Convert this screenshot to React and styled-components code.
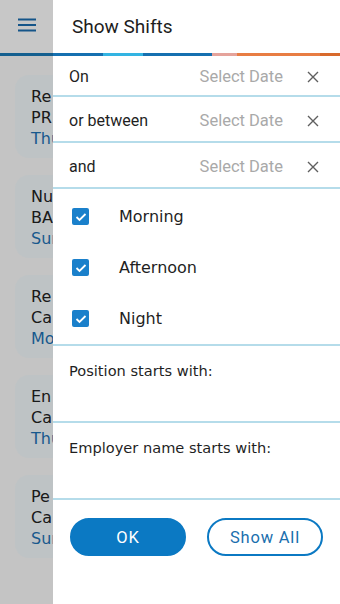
import React from "react";
import styled, { createGlobalStyle } from "styled-components";

const Global = createGlobalStyle`
  html, body { margin: 0; padding: 0; background: #ffffff; }
  body { width: 340px; height: 604px; overflow: hidden; }
  * { box-sizing: border-box; }
`;

const Page = styled.div`
  width: 340px;
  height: 604px;
  background: #fbfbfb;
  font-family: "DejaVu Sans", sans-serif;
  display: flex;
  flex-direction: column;
`;

const PageHeader = styled.header`
  height: 56px;
  flex: none;
  display: flex;
  align-items: center;
  padding: 0 0 3px 18px;
  border-bottom: 3px solid #1a7ab8;
  background: #ffffff;
`;

const CardList = styled.div`
  display: flex;
  flex-direction: column;
  gap: 17px;
  padding: 19px 15px 0 15px;
`;

const Card = styled.div`
  background: #f4fafd;
  border-radius: 14px;
  height: 83px;
  padding: 11px 16px 0 16px;
  display: flex;
  flex-direction: column;
  font-size: 16px;
  line-height: 21px;
  color: #222;
`;

const CardDate = styled.div`
  color: #1f73b5;
`;

const Backdrop = styled.div`
  position: fixed;
  inset: 0;
  background: rgba(0, 0, 0, 0.22);
`;

const Drawer = styled.aside`
  position: fixed;
  top: 0;
  right: 0;
  bottom: 0;
  width: 287px;
  background: #ffffff;
  display: flex;
  flex-direction: column;
`;

const DrawerHeader = styled.div`
  height: 53px;
  flex: none;
  display: flex;
  align-items: center;
  padding: 0 0 0 19px;
  font-family: Roboto, sans-serif;
  font-size: 19px;
  color: #1d1d1d;
`;

const ColorBar = styled.div`
  height: 3px;
  flex: none;
  display: flex;
`;

const Seg = styled.div`
  width: ${(p) => p.$w}px;
  background: ${(p) => p.$c};
`;

const DateRow = styled.div`
  height: ${(p) => p.$h}px;
  flex: none;
  display: flex;
  align-items: center;
  padding: ${(p) => p.$pt}px 21px 0 16px;
  border-bottom: 2px solid #b5dcea;
  font-family: Roboto, sans-serif;
  font-size: 16px;
`;

const RowLabel = styled.span`
  flex: 1;
  color: #1f1f1f;
`;

const Placeholder = styled.span`
  color: #a9a9a9;
  margin-right: 24px;
  font-size: 16.5px;
`;

const Clear = styled.svg`
  width: 12px;
  height: 12px;
  display: block;
`;

const CheckGroup = styled.div`
  flex: none;
  display: flex;
  flex-direction: column;
  padding: 2px 0 0 0;
  border-bottom: 2px solid #b5dcea;
`;

const CheckRow = styled.label`
  height: 51px;
  display: flex;
  align-items: center;
  padding-left: 19px;
  gap: 30px;
  font-family: "DejaVu Sans", sans-serif;
  font-size: 16px;
  color: #1f1f1f;
`;

const Box = styled.span`
  width: 17px;
  height: 17px;
  border-radius: 2px;
  background: #1a80cb;
  display: flex;
  align-items: center;
  justify-content: center;
`;

const TextField = styled.div`
  height: 77px;
  flex: none;
  padding: 16px 0 0 16px;
  border-bottom: 2px solid #b5dcea;
  font-family: "DejaVu Sans", sans-serif;
  font-size: 14.6px;
  color: #1f1f1f;
`;

const Actions = styled.div`
  display: flex;
  gap: 21px;
  padding: 18px 0 0 17px;
`;

const Button = styled.button`
  width: 116px;
  height: 38px;
  border-radius: 19px;
  font-family: Roboto, sans-serif;
  font-size: 16.5px;
  letter-spacing: 0.8px;
  border: 2px solid #0b79c3;
  background: ${(p) => (p.$filled ? "#0b79c3" : "#ffffff")};
  color: ${(p) => (p.$filled ? "#ffffff" : "#1b6fae")};
  padding: 0;
`;

const Menu = () => (
  <svg width="18" height="14" viewBox="0 0 18 14">
    <g stroke="#1b6eb0" strokeWidth="2">
      <line x1="0" y1="1.5" x2="18" y2="1.5" />
      <line x1="0" y1="7" x2="18" y2="7" />
      <line x1="0" y1="12.5" x2="18" y2="12.5" />
    </g>
  </svg>
);

const X = () => (
  <Clear viewBox="0 0 12 12">
    <path d="M1 1 L11 11 M11 1 L1 11" stroke="#5f5f5f" strokeWidth="1.4" fill="none" />
  </Clear>
);

const Tick = () => (
  <svg width="12" height="10" viewBox="0 0 12 10">
    <path d="M1.5 5 L4.5 8 L10.5 2" stroke="#fff" strokeWidth="1.8" fill="none" />
  </svg>
);

const cards = [
  ["Re", "PR", "Thu"],
  ["Nu", "BA", "Sun"],
  ["Re", "Ca", "Mo"],
  ["En", "Ca", "Thu"],
  ["Pe", "Ca", "Sun"],
];

const segs = [
  [50, "#1670b0"],
  [40, "#33b4e2"],
  [69, "#1670b0"],
  [25, "#e5a39b"],
  [83, "#e87d43"],
  [20, "#d86a2c"],
];

const dateRows = [
  ["On", 41, 2],
  ["or between", 46, 3],
  ["and", 46, 3],
];

export default function App() {
  return (
    <>
      <Global />
      <Page>
        <PageHeader>
          <Menu />
        </PageHeader>
        <CardList>
          {cards.map((c, i) => (
            <Card key={i}>
              <div>{c[0]}</div>
              <div>{c[1]}</div>
              <CardDate>{c[2]}</CardDate>
            </Card>
          ))}
        </CardList>
      </Page>
      <Backdrop />
      <Drawer>
        <DrawerHeader>Show Shifts</DrawerHeader>
        <ColorBar>
          {segs.map(([w, c], i) => (
            <Seg key={i} $w={w} $c={c} />
          ))}
        </ColorBar>
        {dateRows.map(([label, h, pt]) => (
          <DateRow key={label} $h={h} $pt={pt}>
            <RowLabel>{label}</RowLabel>
            <Placeholder>Select Date</Placeholder>
            <X />
          </DateRow>
        ))}
        <CheckGroup>
          {["Morning", "Afternoon", "Night"].map((l) => (
            <CheckRow key={l}>
              <Box>
                <Tick />
              </Box>
              {l}
            </CheckRow>
          ))}
        </CheckGroup>
        <TextField>Position starts with:</TextField>
        <TextField>Employer name starts with:</TextField>
        <Actions>
          <Button $filled>OK</Button>
          <Button>Show All</Button>
        </Actions>
      </Drawer>
    </>
  );
}
